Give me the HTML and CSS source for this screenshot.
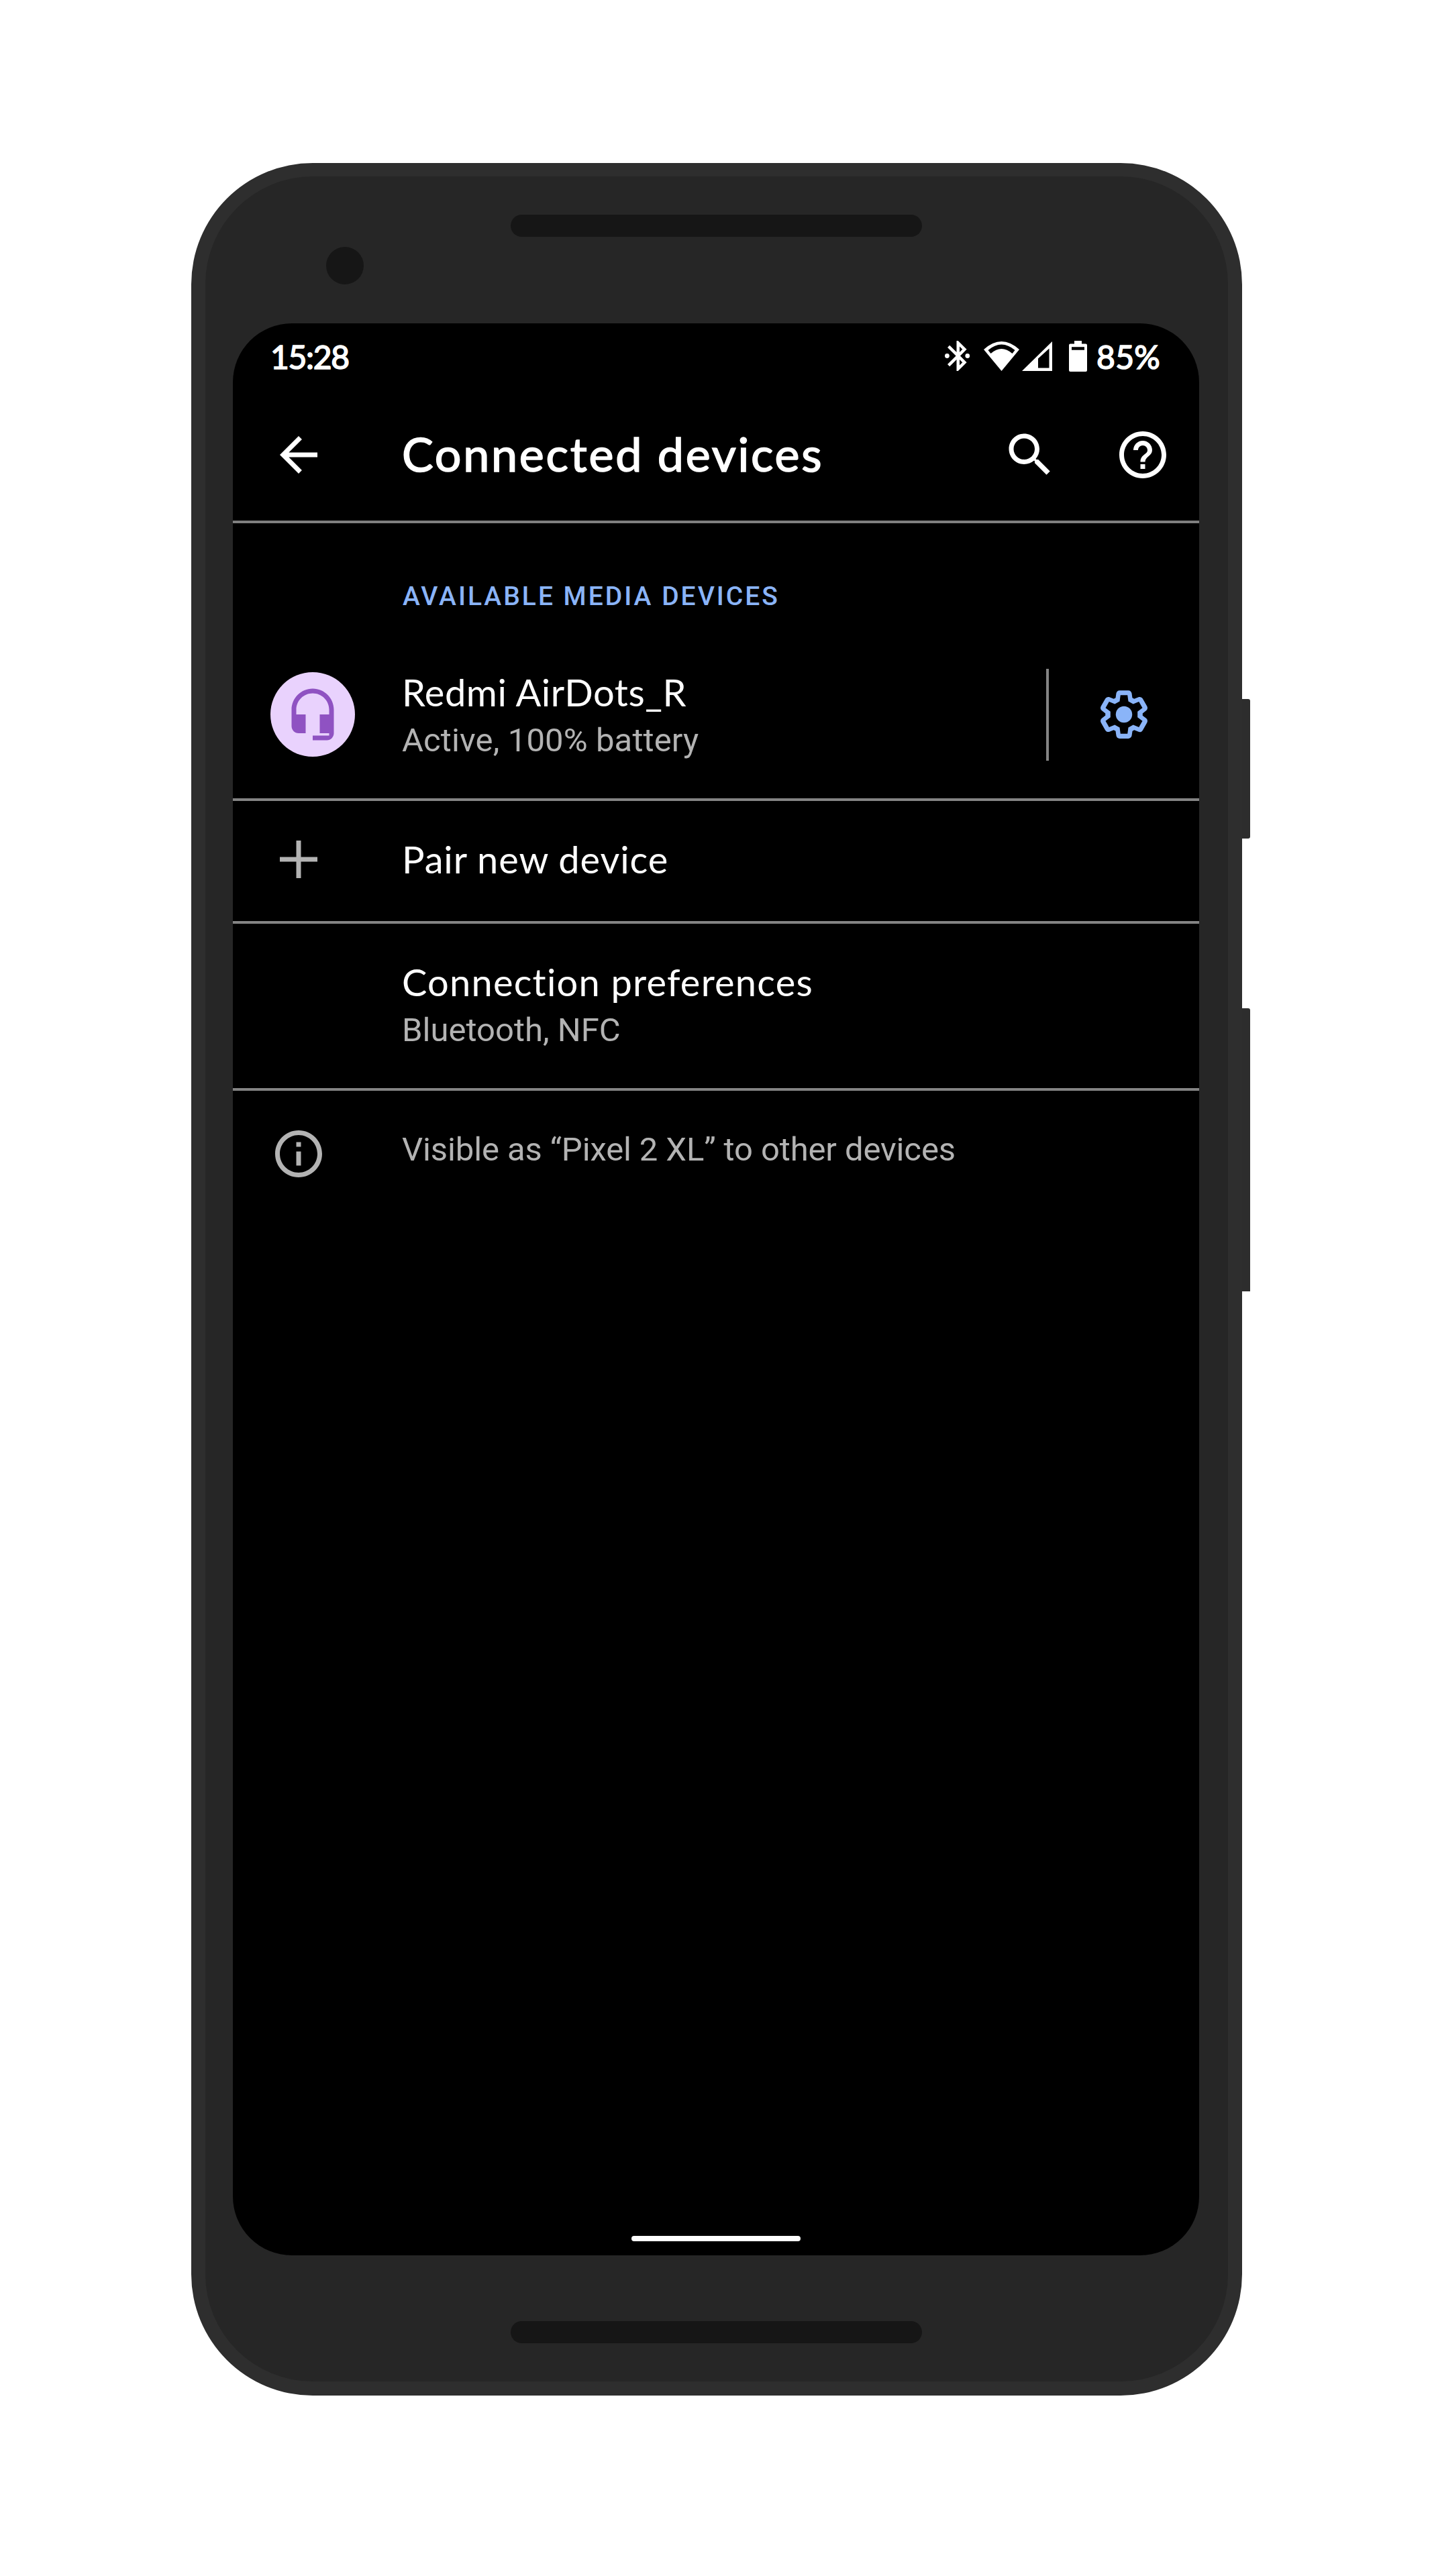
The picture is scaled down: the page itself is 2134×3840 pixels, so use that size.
FILE: index.html
```html
<!DOCTYPE html>
<html lang="en">
<head>
<meta charset="utf-8">
<title>Connected devices</title>
<link rel="stylesheet" href="styles.css">
</head>
<body>
<div class="phone">
  <span class="key key-power"></span>
  <span class="key key-volume"></span>
  <div class="bezel-top">
    <span class="camera"></span>
    <span class="speaker"></span>
  </div>
  <main class="screen">
    <div class="status-bar">
      <span class="clock">15:28</span>
      <div class="status-icons">
        <svg class="st-bluetooth" viewBox="0 0 37 45"><path transform="translate(-7.25 -4.5) scale(2.25)" d="M17.71 7.71L12 2h-1v7.59L6.41 5 5 6.41 10.59 12 5 17.59 6.41 19 11 14.41V22h1l5.71-5.71-4.3-4.29 4.3-4.29zM13 5.83l1.88 1.88L13 9.59V5.83zm1.88 10.46L13 18.17v-3.76l1.88 1.88z"/><circle cx="3.4" cy="22.5" r="3.4"/><circle cx="33.8" cy="22.5" r="3.4"/></svg>
        <svg class="st-wifi" viewBox="0 0 53 44"><path fill-rule="evenodd" d="M0 12Q26.5-12 53 12L26.5 44ZM6.5 13Q26.5-4 46.5 13L42.5 18Q26.5 4 10.5 18Z"/></svg>
        <svg class="st-signal" viewBox="0 0 45 44"><path fill-rule="evenodd" d="M0 44H45V0ZM24 25.5L40.5 10.500V39.500H24Z"/></svg>
        <svg class="st-battery" viewBox="0 0 27 46"><path fill-rule="evenodd" d="M8 0h11v4.500h6a2 2 0 0 1 2 2V44a2 2 0 0 1-2 2H2a2 2 0 0 1-2-2V6.500a2 2 0 0 1 2-2h6ZM4 9.300V13.700H23V9.300Z"/></svg>
        <span class="battery-level">85%</span>
      </div>
    </div>
    <header class="app-bar">
      <svg class="icon" viewBox="0 0 24 24"><path d="M20 11H7.830l5.590-5.590L12 4l-8 8 8 8 1.410-1.410L7.830 13H20v-2z"/></svg>
      <h1 class="page-title">Connected devices</h1>
      <div class="actions">
        <svg class="icon" viewBox="0 0 24 24"><path d="M15.500 14h-.790l-.280-.270C15.410 12.590 16 11.110 16 9.500 16 5.910 13.090 3 9.500 3S3 5.910 3 9.500 5.910 16 9.500 16c1.610 0 3.090-.590 4.230-1.570l.270.280v.790l5 4.990L20.490 19l-4.990-5zm-6 0C7.010 14 5 11.990 5 9.500S7.010 5 9.500 5 14 7.010 14 9.500 11.990 14 9.500 14z"/></svg>
        <svg class="icon" viewBox="0 0 24 24"><path d="M11 18h2v-2h-2v2zm1-16C6.480 2 2 6.480 2 12s4.480 10 10 10 10-4.480 10-10S17.520 2 12 2zm0 18c-4.410 0-8-3.590-8-8s3.590-8 8-8 8 3.590 8 8-3.590 8-8 8zm0-14c-2.210 0-4 1.790-4 4h2c0-1.100.900-2 2-2s2 .900 2 2c0 2-3 1.750-3 5h2c0-2.250 3-2.500 3-5 0-2.210-1.790-4-4-4z"/></svg>
      </div>
    </header>
    <h2 class="category">AVAILABLE MEDIA DEVICES</h2>
    <section class="row row-device">
      <span class="avatar"><svg class="icon" viewBox="0 0 24 24"><path d="M12 1c-4.970 0-9 4.030-9 9v7c0 1.660 1.340 3 3 3h3v-8H5v-2c0-3.870 3.130-7 7-7s7 3.130 7 7v2h-4v8h4v1h-7v2h6c1.660 0 3-1.340 3-3V10c0-4.970-4.030-9-9-9z"/></svg></span>
      <div class="texts">
        <div class="label label-device">Redmi AirDots_R</div>
        <div class="summary">Active, 100% battery</div>
      </div>
      <div class="gear-cell">
        <svg class="icon" viewBox="0 0 24 24"><path fill-rule="evenodd" d="M13.850,22.250h-3.700c-0.740,0-1.360-0.540-1.450-1.270l-0.270-1.890c-0.270-0.140-0.530-0.290-0.790-0.460l-1.800,0.720c-0.700,0.260-1.470-0.030-1.810-0.650L2.200,15.530c-0.350-0.660-0.200-1.440,0.360-1.880l1.530-1.190c-0.010-0.150-0.020-0.300-0.020-0.460c0-0.150,0.010-0.310,0.020-0.460l-1.520-1.190C1.980,9.900,1.830,9.090,2.200,8.470l1.850-3.190c0.340-0.620,1.110-0.900,1.790-0.630l1.810,0.730c0.260-0.170,0.520-0.320,0.780-0.460l0.270-1.910c0.090-0.700,0.710-1.250,1.440-1.250h3.700c0.740,0,1.360,0.540,1.450,1.270l0.270,1.890c0.270,0.140,0.530,0.290,0.790,0.460l1.800-0.720c0.710-0.260,1.480,0.030,1.820,0.650l1.840,3.180c0.360,0.660,0.200,1.440-0.360,1.880l-1.520,1.190c0.010,0.150,0.020,0.300,0.020,0.460s-0.010,0.310-0.020,0.460l1.520,1.190c0.560,0.450,0.720,1.230,0.370,1.860l-1.860,3.220c-0.340,0.620-1.110,0.900-1.800,0.630l-1.800-0.720c-0.260,0.170-0.520,0.320-0.780,0.460l-0.270,1.910C15.210,21.710,14.590,22.250,13.850,22.250z
        M10.500 3.800L10.150 6.400L8.080 7.600L5.650 6.600L4.150 9.200L6.230 10.800V13.200L4.150 14.800L5.650 17.400L8.080 16.400L10.150 17.600L10.500 20.200H13.500L13.850 17.600L15.920 16.400L18.350 17.400L19.850 14.800L17.770 13.200V10.800L19.850 9.200L18.350 6.600L15.920 7.600L13.850 6.400L13.500 3.800Z"/><circle cx="12" cy="12" r="3.5"/></svg>
      </div>
    </section>
    <section class="row row-pair">
      <svg class="icon" viewBox="0 0 24 24"><path d="M20 13h-7v7h-2v-7H4v-2h7V4h2v7h7z"/></svg>
      <div class="texts"><div class="label label-pair">Pair new device</div></div>
    </section>
    <section class="row row-prefs">
      <div class="texts">
        <div class="label label-prefs">Connection preferences</div>
        <div class="summary">Bluetooth, NFC</div>
      </div>
    </section>
    <section class="row row-info">
      <svg class="icon" viewBox="0 0 24 24"><path d="M11 7h2v2h-2zm0 4h2v6h-2zm1-9C6.480 2 2 6.480 2 12s4.480 10 10 10 10-4.480 10-10S17.520 2 12 2zm0 18c-4.410 0-8-3.590-8-8s3.590-8 8-8 8 3.590 8 8-3.590 8-8 8z"/></svg>
      <div class="texts"><div class="summary">Visible as “Pixel 2 XL” to other devices</div></div>
    </section>
    <span class="nav-handle"></span>
  </main>
  <div class="bezel-bottom"><span class="speaker"></span></div>
</div>
</body>
</html>
```
FILE: styles.css
```css
* { box-sizing: border-box; }
body {
  margin: 0;
  padding: 243px 0 0 285px;
  min-height: 3840px;
  background: #fff;
  font-family: Roboto, sans-serif;
}
svg { display: block; flex: none; fill: currentColor; }
h1, h2 { margin: 0; }

.phone {
  position: relative;
  width: 1566px;
  height: 3328px;
  border: 21px solid #2e2e2e;
  border-top-width: 20px;
  border-radius: 181px;
  background: #262626;
}
.key {
  position: absolute;
  left: 1545px;
  width: 12px;
  background: #2d2d2d;
  border-radius: 0 3px 3px 0;
}
.key-power { top: 779px; height: 208px; }
.key-volume { top: 1240px; height: 422px; border-bottom-right-radius: 0; }

.bezel-top { display: flex; height: 219px; padding-left: 180px; }
.camera { width: 56px; height: 56px; margin-top: 105px; border-radius: 50%; background: #161616; }
.speaker { width: 613px; height: 33px; border-radius: 17px; background: #161616; }
.bezel-top .speaker { margin: 57px 0 0 219px; }
.bezel-bottom { padding: 98px 0 0 455px; }
.bezel-bottom .speaker { display: block; }

.screen {
  display: flex;
  flex-direction: column;
  width: 1440px;
  height: 2880px;
  margin-left: 41px;
  border-radius: 88px;
  overflow: hidden;
  background: #000;
  color: #fff;
}
.icon { width: 84px; height: 84px; }

.status-bar {
  display: flex;
  justify-content: space-between;
  align-items: center;
  height: 97px;
  padding: 0 55px 0 56px;
  font: 400 48px/58px Lato, sans-serif;
  -webkit-text-stroke: 1.6px #fff;
}
.clock { padding-top: 2px; letter-spacing: -1.3px; }
.status-icons { display: flex; align-items: center; }
.status-icons svg { -webkit-text-stroke: 0; }
.st-bluetooth { width: 37px; height: 45px; margin-right: 21px; }
.st-wifi { width: 53px; height: 44px; margin-right: 4px; }
.st-signal { width: 45px; height: 44px; margin-right: 25px; }
.st-battery { width: 27px; height: 46px; margin-right: 14px; }
.battery-level { width: 98px; padding-top: 2px; letter-spacing: 0.3px; white-space: nowrap; }

.app-bar {
  display: flex;
  align-items: center;
  height: 201px;
  padding: 0 42px 0 56px;
  border-bottom: 4px solid #7f7f7f;
}
.page-title {
  flex: 1;
  margin-left: 112px;
  padding-bottom: 3px;
  font: 400 70px/84px Lato, sans-serif;
  letter-spacing: 2.75px;
  white-space: nowrap;
  -webkit-text-stroke: 1.6px #fff;
}
.actions { display: flex; gap: 84px; }

.category {
  height: 160px;
  padding: 58px 0 0 253px;
  color: #8ab4f8;
  font-size: 39px;
  font-weight: 500;
  line-height: 102px;
  letter-spacing: 3px;
}

.row {
  display: flex;
  align-items: center;
  padding-left: 56px;
  border-bottom: 4px solid #848484;
}
.row > .icon { color: #b3b3b3; }
.texts { flex: 1; margin-left: 112px; white-space: nowrap; }
.label { font: 400 56px/72px Lato, sans-serif; font-variant-ligatures: none; }
.label-device { letter-spacing: 0.55px; }
.label-pair { letter-spacing: 0.9px; }
.label-prefs { letter-spacing: 1.2px; }
.summary { color: #b3b3b3; font-size: 49px; line-height: 66px; }
.label + .summary { margin-top: 3px; }

.row-device { height: 254px; }
.row-device .texts { margin-left: 70px; padding-top: 2px; }
.row-device .summary { letter-spacing: 0.12px; }
.avatar {
  display: grid;
  place-items: center;
  width: 126px;
  height: 126px;
  border-radius: 50%;
  background: #e9d2fd;
  color: #8f52c2;
}
.gear-cell {
  display: flex;
  align-items: center;
  height: 137px;
  padding: 0 70px;
  border-left: 4px solid #848484;
  color: #8ab4f8;
}
.row-pair { height: 183px; padding-bottom: 5px; }
.row-prefs { height: 249px; padding: 0 0 2px 140px; }
.row-info { align-items: flex-start; padding-top: 52px; border: 0; }
.row-info .texts { margin-top: 3px; }
.row-info .summary { letter-spacing: -0.12px; }

.nav-handle {
  width: 252px;
  height: 8px;
  margin: auto auto 21px;
  border-radius: 4px;
  background: #fff;
}
```
